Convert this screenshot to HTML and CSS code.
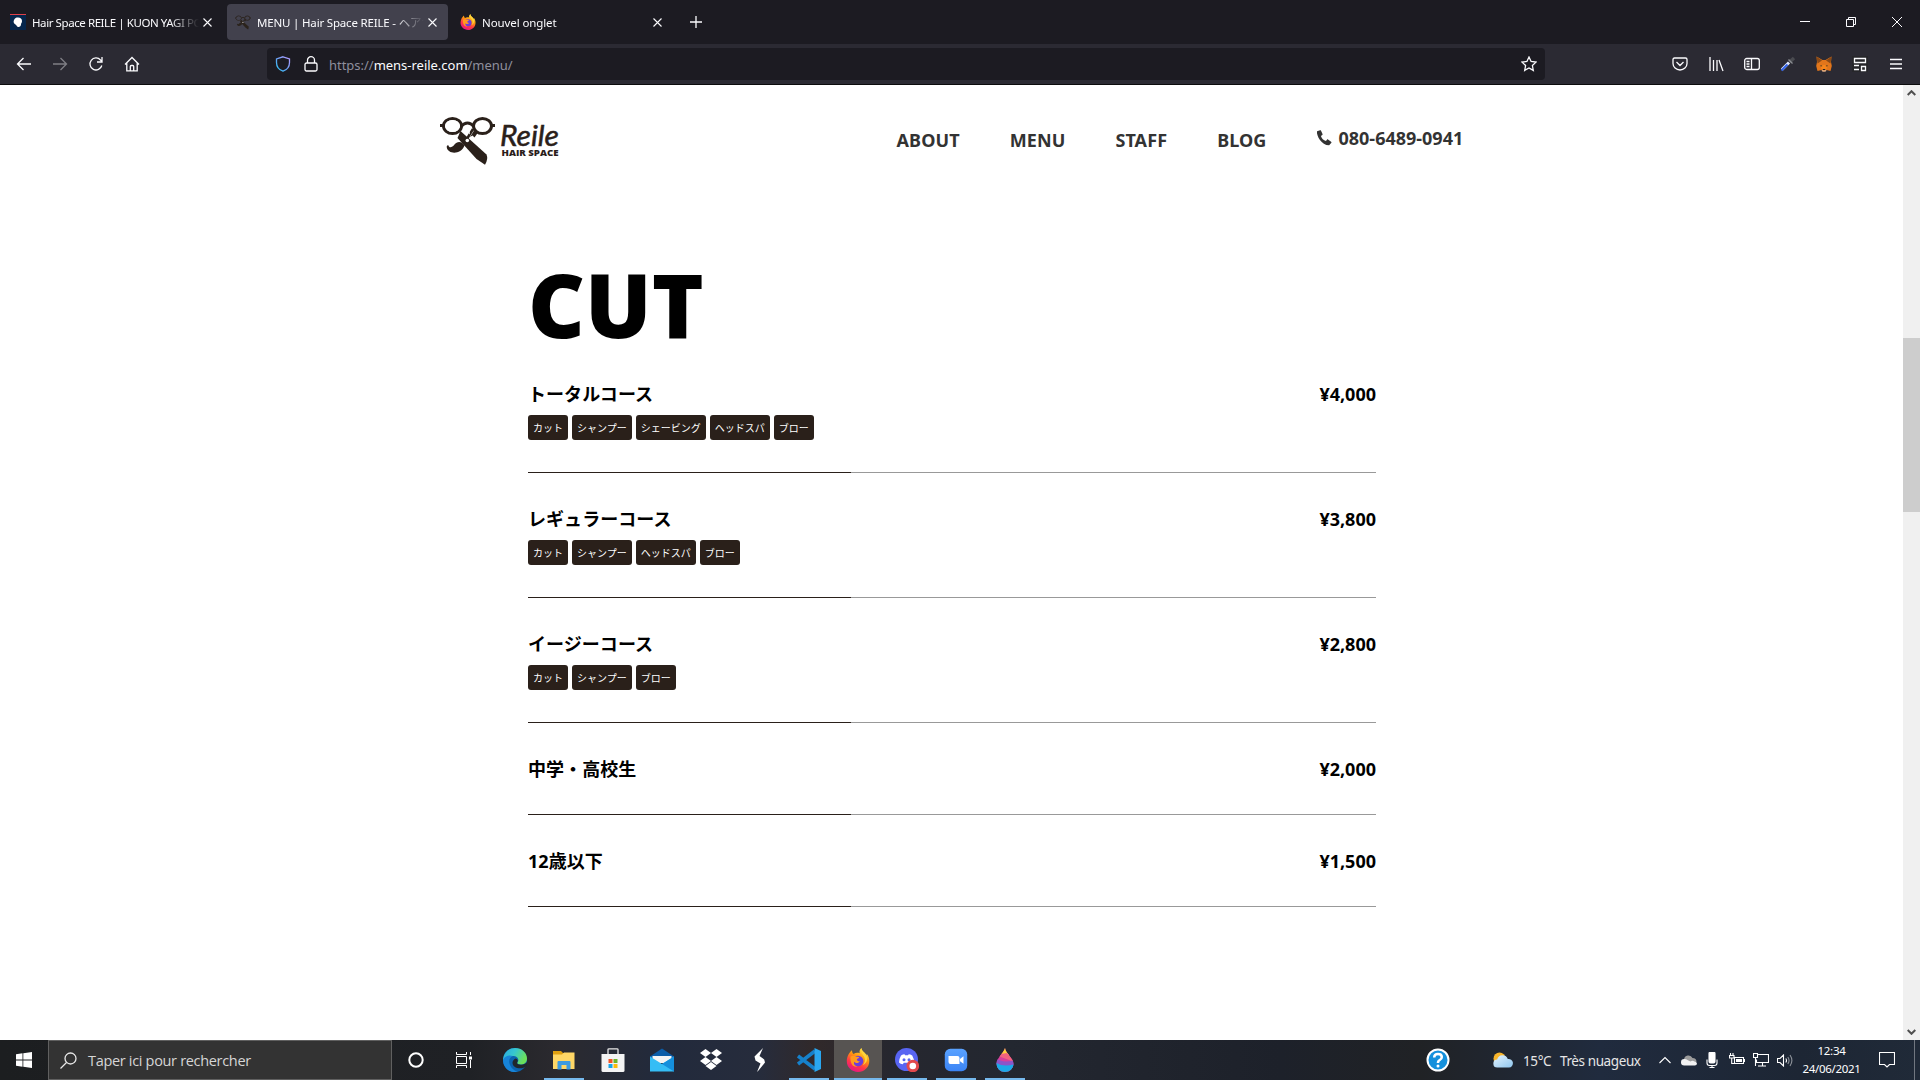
FILE: index.html
```html
<!DOCTYPE html>
<html lang="ja">
<head>
<meta charset="utf-8">
<title>MENU | Hair Space REILE</title>
<link rel="stylesheet" href="styles.css">
</head>
<body>
<svg class="defs" width="0" height="0">
  <defs>
    <linearGradient id="ffBody" x1="0.8" y1="0" x2="0.3" y2="1"><stop offset="0" stop-color="#fff44f"/><stop offset=".4" stop-color="#ff980e"/><stop offset=".7" stop-color="#ff3647"/><stop offset="1" stop-color="#e31587"/></linearGradient>
    <linearGradient id="edgeA" x1="0" y1="0" x2="1" y2=".4"><stop offset="0" stop-color="#2aa8e0"/><stop offset=".5" stop-color="#36c6cf"/><stop offset="1" stop-color="#6be05a"/></linearGradient>
    <linearGradient id="shieldG" x1="1" y1="0" x2="0" y2="1"><stop offset="0" stop-color="#b79bff"/><stop offset=".5" stop-color="#6f9ff5"/><stop offset="1" stop-color="#24c6f5"/></linearGradient>
    <linearGradient id="cloudG" x1="0" y1="0" x2="1" y2="1"><stop offset="0" stop-color="#e4f4ff"/><stop offset="1" stop-color="#8fc6ee"/></linearGradient>
    <linearGradient id="zoomG" x1="0" y1="0" x2="0" y2="1"><stop offset="0" stop-color="#5aa2ff"/><stop offset="1" stop-color="#3b84f5"/></linearGradient>
    <clipPath id="dropClip"><path d="M10 0C11 6 18.500 10 18.500 16A8.500 8 0 0 1 1.500 16C1.500 10 8 6 10 0Z"/></clipPath>
    <symbol id="firefox" viewBox="0 0 24 24">
      <path fill="url(#ffBody)" d="M15.500 0c-2 1.800-2.400 3.800-1.700 5.300-2-.8-4.600-.6-6.200.6C6.300 5.200 6 3.500 6 2.300 3.600 4 .8 8.300.8 13.300.8 19.300 5.800 24 12 24s11.300-4.700 11.300-11c0-3-1-5.500-2.600-7 .1 1 0 1.800-.2 2.300C19.800 4.800 15.400 3.400 15.500 0Z"/>
      <circle cx="12" cy="13" r="5.300" fill="#6b3ddb"/>
      <path fill="#ff9b1e" d="M4.500 8.500c2-1 4.500-.8 5.800.2 1.400.1 2.500.1 2.900.5-.1 1-1.700 1.300-2.400 2 .2 1.600 1.500 2.400 3 2.100-1 2.100-4 2.400-5.500.5-1.100 2.500 1 4.600 3.500 4.700-4.800 1-8-2.700-7.300-10Z"/>
      <path fill="#ffd43a" d="M15.500 0c-2 3 1.500 6.500 2.800 9 1.300 3 .4 6-1.500 8 4.500-2 5-6.500 3.900-9.500C19.800 4.800 15.400 3.400 15.500 0Z"/>
    </symbol>
    <symbol id="scissors" viewBox="0 0 55 48">
      <path d="M20.500 14 46.500 37.500Q48.500 42 45 47.800L36.500 42 17.500 21Z" fill="currentColor"/>
      <path d="M30 20 35 12 38 15.500 34.500 20.500 32.500 18.500Z" fill="currentColor"/>
      <g fill="none" stroke="currentColor" stroke-width="3"><ellipse cx="12.500" cy="9" rx="9" ry="7.500"/><ellipse cx="42.500" cy="9" rx="9" ry="7.500"/><path d="M21 9.500Q27.500 2.500 34 9.500"/><path d="M0 8.500H4M51 8.500H55"/></g>
      <path d="M33 12 25 25" stroke="currentColor" stroke-width="2.500"/>
      <ellipse cx="12.500" cy="9" rx="7.500" ry="6" fill="var(--lens, #fff)"/>
      <circle cx="27.300" cy="23.500" r="1.800" fill="#fff"/><path d="M25.500 13.500 30 17.500 29 11Z" fill="var(--lens, #fff)"/>
      <path fill="currentColor" d="M24.500 28.500C22 24 17 24 14.500 27.500 12 31 9 31 8.500 28.500c-1-.8-2 .2-1.700 2C8 37.500 21 38 24.500 28.500Z"/>
    </symbol>
  </defs>
</svg>

<div class="screen">
  <header class="browser">
    <div class="tabs">
      <div class="tab tab-first">
        <svg class="favicon" width="16" height="16" viewBox="0 0 16 16"><path fill="#05264c" d="M0 0h16v16H0z"/><path fill="#e04048" d="M0 0h16v1H0z"/><path fill="#fff" d="M8 3.500c2.500 0 4 1.500 4 3.500s-1 2-1 3.500-1.500 3-3 2.500-1-1.500-2.500-2.500S3 8 4 6s2-2.500 4-2.500Z"/></svg>
        <span class="tab-title">Hair Space REILE | KUON YAGI PO</span>
        <svg class="close" width="9" height="9" viewBox="0 0 9 9"><path d="m.5.500 8 8m0-8-8 8"/></svg>
      </div>
      <div class="tab tab-active">
        <svg class="favicon fav-cut" width="16" height="15"><use href="#scissors"/></svg>
        <span class="tab-title">MENU | Hair Space REILE - ヘアサ</span>
        <svg class="close" width="9" height="9" viewBox="0 0 9 9"><path d="m.5.500 8 8m0-8-8 8"/></svg>
      </div>
      <div class="tab tab-last">
        <svg class="favicon" width="16" height="16"><use href="#firefox"/></svg>
        <span class="tab-title">Nouvel onglet</span>
        <svg class="close" width="9" height="9" viewBox="0 0 9 9"><path d="m.5.500 8 8m0-8-8 8"/></svg>
      </div>
      <svg class="newtab" width="12" height="12" viewBox="0 0 12 12"><path d="M6 0v12M0 6h12"/></svg>
      <div class="win">
        <svg width="10" height="10" viewBox="0 0 10 10"><path d="M0 4.500h10"/></svg>
        <svg width="10" height="10" viewBox="0 0 10 10"><path d="M.5 2.500h7v7h-7zM2.500 2.500v-2h7v7h-2"/></svg>
        <svg width="10" height="10" viewBox="0 0 10 10"><path d="m0 0 10 10M10 0 0 10"/></svg>
      </div>
    </div>
    <div class="toolbar">
      <div class="navbtns">
        <svg width="16" height="16" viewBox="0 0 16 16"><path d="M15 8H1.500M7.500 2l-6 6 6 6"/></svg>
        <svg class="dim" width="16" height="16" viewBox="0 0 16 16"><path d="M1 8h13.500M8.500 2l6 6-6 6"/></svg>
        <svg width="16" height="16" viewBox="0 0 16 16"><path d="M13.800 9.500A6 6 0 1 1 12.500 4L14 5.500M14 1v5H9"/></svg>
        <svg width="16" height="16" viewBox="0 0 16 16"><path d="M1 8.500 8 1.500l7 7M2.800 7v7.800h10.400V7M6.300 14.500V10.500q0-1 1-1h1.400q1 0 1 1v4"/></svg>
      </div>
      <div class="urlbar">
        <svg width="16" height="16" viewBox="0 0 16 16"><path stroke="url(#shieldG)" d="M8 .8 14.500 3v3.500C14.500 10.500 12 13.800 8 15.200 4 13.800 1.500 10.500 1.500 6.500V3Z"/></svg>
        <svg class="lock" width="14" height="16" viewBox="0 0 14 16"><rect x="1" y="7" width="12" height="8" rx="1.500"/><path d="M3.500 7V4.200a3.500 3.500 0 0 1 7 0V7"/></svg>
        <span class="url">https://<b>mens-reile.com</b>/menu/</span>
        <svg class="star" width="16" height="16" viewBox="0 0 16 16"><path d="m8 1 2.100 4.500 4.900.6-3.600 3.400.9 4.900L8 12l-4.300 2.400.9-4.900L1 6.100l4.900-.6Z"/></svg>
      </div>
      <div class="exts">
        <svg width="16" height="16" viewBox="0 0 16 16"><path d="M2.500 2h11q1.500 0 1.500 1.500V7.500a7 6.500 0 0 1-14 0v-4Q1 2 2.500 2ZM4.500 6 8 9.500 11.500 6"/></svg>
        <svg width="16" height="16" viewBox="0 0 16 16"><path d="M2 1v14M5.500 4v11M9 4v11M11 4l4 11"/></svg>
        <svg width="16" height="16" viewBox="0 0 16 16"><rect x=".7" y="2.500" width="14.600" height="11" rx="2"/><path d="M7.500 2.500v11M2.500 5.500h3M2.500 8h3M2.500 10.500h3"/></svg>
        <svg width="16" height="16" viewBox="0 0 16 16"><path stroke="#4a4b50" stroke-width="3.500" d="M9.500 6 14 2"/><path stroke="#8b8d93" stroke-width="1.200" d="m8.500 3.500 4 4"/><path stroke="#dfe7ff" stroke-width="3" d="M2 13.500 9 6.500"/><path stroke="#3565e8" stroke-width="2.200" d="m1.500 14.500 6-6"/></svg>
        <svg width="16" height="16" viewBox="0 0 16 16" class="solid"><path fill="#e2761b" d="M.5.500 6.500 4h3L15.500.5 15 6l.8 4-1.300 5-4-1-1 1.500h-3l-1-1.500-4 1L.2 10 1 6Z"/><path fill="#8a4a17" d="M.5.500 6 4.500 1.500 7.500ZM15.500.5 10 4.500l4.500 3Z"/><path fill="#f6851b" d="M4 9h8l-2 5H6Z"/><path fill="#222" d="m4.500 9 2 1-1.800.5ZM11.500 9l-2 1 1.800.5ZM6.800 13h2.400v1H6.800Z"/><path fill="#d9c7bb" d="m5.500 14 1 1.600h3l1-1.600-1.500.5h-2Z"/></svg>
        <svg width="16" height="16" viewBox="0 0 16 16"><path fill="#26262a" stroke="none" d="M0 0h16v16H0z"/><path d="M2.500 2.500h11v4h-11zM9.500 10.500h4v4h-4zM2 9.500h5M2 13.500h5"/></svg>
        <svg width="16" height="16" viewBox="0 0 16 16"><path d="M2 3.500h12M2 8h12M2 12.500h12"/></svg>
      </div>
    </div>
  </header>

  <div class="viewport">
    <main class="page">
      <div class="site-head">
        <svg class="logo" width="122" height="50" viewBox="0 0 122 50">
          <use href="#scissors" width="55" height="48"/>
          <text class="logo-script" x="60" y="28.500" textLength="59" lengthAdjust="spacingAndGlyphs">Reile</text>
          <text class="logo-sub" x="61.500" y="39" textLength="57" lengthAdjust="spacingAndGlyphs">HAIR SPACE</text>
        </svg>
        <nav class="site-nav">
          <a>ABOUT</a><a>MENU</a><a>STAFF</a><a>BLOG</a>
          <a class="tel"><svg width="16" height="16" viewBox="0 0 14 14"><path d="M3.600.3.900 1.100C.2 5 5 13.500 11.500 13.400l2-2.300c.2-.4 0-.7-.3-.9L10.500 8.300c-.3-.2-.7-.1-.9.200l-.9 1.200C6.500 9 5 7.300 4.300 5.200l1.200-.9c.3-.2.400-.6.200-.9L4.400.6C4.200.3 3.900.2 3.600.3Z"/></svg>080-6489-0941</a>
        </nav>
      </div>
      <section class="menu">
        <h1>CUT</h1>
        <ul>
          <li><div class="line"><span class="name">トータルコース</span><span class="price">¥4,000</span></div><div class="tags"><i>カット</i><i>シャンプー</i><i>シェービング</i><i>ヘッドスパ</i><i>ブロー</i></div></li>
          <li><div class="line"><span class="name">レギュラーコース</span><span class="price">¥3,800</span></div><div class="tags"><i>カット</i><i>シャンプー</i><i>ヘッドスパ</i><i>ブロー</i></div></li>
          <li><div class="line"><span class="name">イージーコース</span><span class="price">¥2,800</span></div><div class="tags"><i>カット</i><i>シャンプー</i><i>ブロー</i></div></li>
          <li><div class="line"><span class="name">中学・高校生</span><span class="price">¥2,000</span></div></li>
          <li><div class="line"><span class="name">12歳以下</span><span class="price">¥1,500</span></div></li>
        </ul>
      </section>
    </main>
    <div class="scrollbar">
      <svg width="9" height="6" viewBox="0 0 9 6"><path d="M.7 5 4.500 1.200 8.300 5"/></svg>
      <div class="thumb"></div>
      <svg class="down" width="9" height="6" viewBox="0 0 9 6"><path d="M.7 1 4.500 4.800 8.300 1"/></svg>
    </div>
  </div>

  <footer class="taskbar">
    <div class="start"><svg width="16" height="16" viewBox="0 0 16 16"><path fill="#fff" d="M0 2.200 6.500 1.300V7.600H0ZM7.300 1.200 16 0V7.600H7.300ZM0 8.400H6.500V14.700L0 13.800ZM7.300 8.400H16V16L7.300 14.800Z"/></svg></div>
    <div class="search"><svg width="17" height="17" viewBox="0 0 17 17"><circle cx="10.500" cy="6.500" r="5.500"/><path d="M6.500 10.500.5 16.500"/></svg><span>Taper ici pour rechercher</span></div>
    <div class="sys"><svg width="16" height="16" viewBox="0 0 16 16"><circle cx="8" cy="8" r="6.700" fill="none" stroke="#fff" stroke-width="2"/></svg></div>
    <div class="sys"><svg width="16" height="16" viewBox="0 0 16 16" fill="none" stroke="#fff"><path d="M.5 0v2.500h10V0M.5 16v-2.500h10V16M.5 4.500h10v7H.5zM14.500 0v3M14.500 8v8"/><path fill="#fff" stroke="none" d="M13 4.500h3v3h-3z"/></svg></div>
    <div class="apps">
      <div class="app"><svg width="24" height="24" viewBox="0 0 24 24"><circle cx="12" cy="12" r="12" fill="#0c63ae"/><path fill="url(#edgeA)" d="M0 11C1 4 6 0 12 0c7 0 12 5 12 10.500 0 4-3 6-6 6-3 0-4.500-1-3.500-2.200 1.800-2 .8-5.800-3.500-6.300C6 7.500 1.500 9 0 13Z"/><path fill="#1784d8" d="M0 12c1.500-4 6-5.500 10-4-3 .8-4.500 4-3.500 7.500 1 4 4.500 7.500 8.500 8.100C6 26 0 19 0 12Z"/><path fill="#20262c" d="M12.500 10.500c2.300.5 2.800 2.300 1.800 3.700-.7 1.300.5 2.500 3.700 2.500 2.500 0 4.500-1 6-2.500v3.500l-1.200.5c-1 1.200-2.500 1.600-3.800 2-5 .8-9.700-1.500-9.500-5.700.2-1.500 1.300-3.500 3-4Z"/></svg></div>
      <div class="app open"><svg width="24" height="24" viewBox="0 0 24 24"><path fill="#e0a010" d="M1 3h8l2 2h11v5H1Z"/><path fill="#ffd766" d="M1 6.500h9L12 4.500h10.500V21H1Z"/><path fill="#3d9be0" d="M6.500 13h11q1 0 1 1v7.500h-4V17h-5v4.500h-4V14q0-1 1-1Z"/></svg></div>
      <div class="app"><svg width="24" height="24" viewBox="0 0 24 24"><path fill="none" stroke="#e8e8e8" stroke-width="1.300" d="M7 7V1.500Q7 .8 8 .8h8q1 0 1 .8V7"/><path fill="#f4f4f4" d="M.5 6h23v16.500Q23.500 24 22 24H2Q.5 24 .5 22.500Z"/><path fill="#f35325" d="M7.500 11h4v4h-4z"/><path fill="#6eb52a" d="M12.500 11h4v4h-4z"/><path fill="#18a5e8" d="M7.500 16h4v4h-4z"/><path fill="#ffba08" d="M12.500 16h4v4h-4z"/></svg></div>
      <div class="app"><svg width="24" height="24" viewBox="0 0 24 24"><path fill="#0c5da8" d="M12 .5 24 8.500v4H0v-4Z"/><path fill="#f4f4f4" d="M2.500 8h19v7h-19z"/><path fill="#35bdf5" d="M0 8.500 12 16 24 8.500V23.500H0Z"/><path fill="#158fdc" d="M12 16 24 23.500V8.500Z"/></svg></div>
      <div class="app"><svg width="24" height="24" viewBox="0 0 24 24" fill="#fff"><path d="m6.500 1 5.500 4-5.500 4L1 5Zm11 0L23 5l-5.500 4L12 5ZM1 13l5.500-4 5.500 4-5.500 4Zm16.500-4 5.500 4-5.500 4-5.500-4ZM6.500 18 12 14l5.500 4-5.500 4Z"/></svg></div>
      <div class="app"><svg width="24" height="24" viewBox="0 0 24 24" fill="#fff"><path d="M15 0 6.500 8.500 7.500 12.500l5 3L9 24l1.500-1.500 6.500-8-.8-3-4.700-3.500Z"/></svg></div>
      <div class="app open"><svg width="24" height="24" viewBox="0 0 24 24"><path fill="none" stroke="#1681cb" stroke-width="3.600" d="m1 8 17 13M1 16 18 3"/><path fill="#2aa7f0" d="m17.500 0 6.500 3v18l-6.500 3Z"/></svg></div>
      <div class="app open active"><svg width="24" height="24"><use href="#firefox"/></svg></div>
      <div class="app open"><svg width="24" height="24" viewBox="0 0 24 24"><circle cx="11.500" cy="11.500" r="11.500" fill="#5865f2"/><path fill="#fff" d="M6 7.500Q8 6.200 9.500 6.200l.6 1h3l.6-1q1.500 0 3.500 1.300 2 3.500 2 7-1.500 1.500-3.800 1.800l-1-1.500H8.800l-1 1.500Q5.500 16 4 14.500 4 11 6 7.500Z"/><circle cx="9" cy="11.800" r="1.500" fill="#5865f2"/><circle cx="14" cy="11.800" r="1.500" fill="#5865f2"/><circle cx="17.800" cy="18" r="6.300" fill="#e2494c"/><circle cx="17.800" cy="18" r="3.300" fill="#fff"/></svg></div>
      <div class="app open"><svg width="24" height="24" viewBox="0 0 24 24"><rect x=".8" y=".8" width="22.400" height="22.400" rx="5.500" fill="url(#zoomG)"/><path fill="#fff" d="M4.500 8h9q2 0 2 2v6h-9q-2 0-2-2ZM16 11l3.500-2.700v7.500L16 13.200Z"/></svg></div>
      <div class="app open"><svg width="20" height="24" viewBox="0 0 20 24"><g clip-path="url(#dropClip)"><path fill="#d83f9a" d="M0 0h20v24H0z"/><path fill="#ffd23c" d="M0 0h20v8L0 5Z"/><path fill="#f2637e" d="M0 7 12 5l8 6v3Z"/><path fill="#8b55c8" d="M0 9q6 7 20 3v7Q8 20 0 15Z"/><path fill="#1ba9e8" d="M0 14q8 6 20 2v8H0Z"/></g></svg></div>
    </div>
    <div class="tray">
      <svg class="help" width="24" height="24" viewBox="0 0 24 24"><circle cx="12" cy="12" r="10.500" fill="#1490dc" stroke="#fff" stroke-width="2"/><path fill="none" stroke="#fff" stroke-width="2.500" d="M8.200 9.500Q8.200 6 12 6t3.800 3q0 2-2 3T12 15"/><circle cx="12" cy="18" r="1.500" fill="#fff"/></svg>
      <svg class="weather" width="21" height="16" viewBox="0 0 21 16"><circle cx="6.500" cy="6.500" r="6" fill="#f7b52b"/><path fill="url(#cloudG)" d="M4.500 15.500a4 4 0 0 1-.3-8A5.500 5.500 0 0 1 14.800 7a4.300 4.300 0 1 1 1.200 8.500Z"/></svg>
      <span class="temp">15°C</span><span class="cond">Très nuageux</span>
      <svg class="chev" width="12" height="8" viewBox="0 0 12 8"><path d="m.5 7 5.500-5.500L11.500 7"/></svg>
      <svg class="od" width="16" height="11" viewBox="0 0 16 11"><path fill="#9c9c9c" d="M3 4.500a4.500 4.500 0 0 1 8.500-1.500A4 4 0 0 1 15.500 7H3Z"/><path fill="#f2f2f2" d="M3.200 10.500a3.200 3.200 0 0 1 0-6.400Q5 4 6.500 5l3 1.500q2-1.500 4 0 2.500.5 2.500 2.300-.2 1.700-2.200 1.700Z"/></svg>
      <svg class="mic" width="12" height="16" viewBox="0 0 12 16"><rect x="3" y="0" width="6" height="11" rx="1.500" fill="#fff"/><path d="M1 7.500V11q0 2.500 2.500 2.500h5Q11 13.500 11 11V7.500M6 13.500V16M3.500 15.500h5"/></svg>
      <svg class="bat" width="16" height="14" viewBox="0 0 16 14"><path d="M5.500 4.500h9v6h-9z"/><path fill="#fff" stroke="none" d="M7 6h6v3H7zM15 6h1v3h-1z"/><path d="M1.500 0v2M4 0v2M.5 2.500h4.500v2.500H.5zM2.700 5v5.500H5"/></svg>
      <svg class="net" width="16" height="14" viewBox="0 0 16 14"><path d="M5 1.500h10.500v8H3.500v-3M9.500 10v3M5 13h8M.5.500h4v4h-4zM2.500 4.500V13"/></svg>
      <svg class="vol" width="16" height="13" viewBox="0 0 16 13"><path d="M.5 4.500h2.500L6.500 1v11L3 8.500H.5zM8.800 4.500q1.400 2 0 4"/><path class="faint" d="M10.800 3q2.500 3.500 0 7M13 1q3.800 5.500 0 11"/></svg>
      <div class="clock"><span>12:34</span><span>24/06/2021</span></div>
      <svg class="notif" width="16" height="16" viewBox="0 0 16 16"><path d="M.5.500h15v12H10.500L8 15 5.500 12.500H.5z"/></svg>
      <div class="peek"></div>
    </div>
  </footer>
</div>
</body>
</html>
```
FILE: styles.css
```css
* { box-sizing: border-box; }
body { margin: 0; background: #fff; overflow: hidden; font-family: "Noto Sans", "Noto Sans CJK JP", sans-serif; }
.defs { display: block; height: 0; }
svg { flex: none; display: block; }
.screen { width: 1920px; height: 1080px; display: flex; flex-direction: column; }

/* browser chrome */
.browser { height: 85px; background: #2b2a33; border-bottom: 1px solid #0c0c0d; color: #fbfbfe; flex: none; }
.browser svg { fill: none; stroke: #fbfbfe; stroke-width: 1.3; }
.browser .favicon, .browser .solid { stroke: none; }
.tabs { height: 44px; background: #1c1b22; display: flex; align-items: center; }
.tab { height: 36px; display: flex; align-items: center; border-radius: 4px; }
.tab-first { width: 221px; padding-left: 10px; margin-right: 6px; }
.tab-active { width: 221px; background: #42414d; padding-left: 8px; }
.tab-last { width: 221px; padding-left: 12px; }
.browser .fav-cut { color: #2b231c; --lens: #42414d; }
.tab-title { margin-left: 6px; padding-top: 2px; width: 167px; font-size: 11.5px; letter-spacing: -0.18px; line-height: 20px; white-space: nowrap; overflow: hidden; flex: none; -webkit-mask-image: linear-gradient(90deg, #000 138px, transparent 167px); mask-image: linear-gradient(90deg, #000 138px, transparent 167px); }
.tab-first .tab-title { letter-spacing: -0.42px; }
.tab-last .tab-title { letter-spacing: -0.1px; }
.close { margin-left: 4px; }
.browser .close { stroke-width: 1.1; }
.newtab { margin-left: 21px; }
.win { margin-left: auto; margin-right: 18px; display: flex; gap: 36px; }
.browser .win svg { stroke-width: 1; }
.toolbar { height: 40px; display: flex; align-items: center; padding-left: 16px; }
.navbtns { display: flex; gap: 20px; width: 251px; }
.dim { opacity: .4; }
.urlbar { width: 1278px; height: 32px; background: #1c1b22; border-radius: 4px; display: flex; align-items: center; padding: 0 8px; }
.lock { margin-left: 13px; }
.url { margin-left: 11px; padding-top: 2px; font-size: 13px; letter-spacing: -.02px; color: #8f8f9d; line-height: 20px; }
.url b { font-weight: 400; color: #fbfbfe; }
.star { margin-left: auto; }
.exts { display: flex; gap: 20px; margin-left: 127px; }

/* web page */
.viewport { flex: 1; display: flex; min-height: 0; }
.page { flex: 1; background: #fff; padding-top: 32px; }
.site-head { display: flex; margin-left: 440px; height: 50px; color: #2a201a; }
.logo-script { font: italic 400 28px Lato, sans-serif; fill: #2a201a; stroke: #2a201a; stroke-width: .5; }
.logo-sub { font: 800 8.500px "Open Sans", sans-serif; fill: #2a201a; }
.site-nav { display: flex; gap: 50px; margin-left: 334.500px; font-size: 18px; font-weight: 700; letter-spacing: .1px; line-height: 24px; color: #333; padding-top: 11px; white-space: nowrap; }
.tel { display: flex; gap: 6px; align-items: center; height: 20px; letter-spacing: 0; }
.tel svg { fill: #333; }
.menu { margin: 83px 0 0 528px; width: 848px; color: #000; }
h1 { margin: 0; height: 98px; line-height: 108px; font-size: 88px; font-weight: 900; }
ul { list-style: none; margin: 0; padding: 0; }
li { padding: 32px 0; border-bottom: 1px solid #999; border-image: linear-gradient(90deg, #2a201a 323px, #999 323px) 1; }
.line { display: flex; justify-content: space-between; font-size: 18px; font-weight: 700; line-height: 29px; height: 27px; }
.name { letter-spacing: .05px; }
.tags { display: flex; gap: 4px; margin-top: 8px; }
.tags i { font-style: normal; background: #2a201a; color: #fff; font-size: 10px; line-height: 15px; padding: 6px 5px 4px; border-radius: 3px; }
.scrollbar { width: 17px; background: #f0f0f0; display: flex; flex-direction: column; align-items: center; padding: 5px 0; }
.scrollbar svg { fill: none; stroke: #505050; stroke-width: 2; }
.thumb { width: 17px; height: 174px; background: #cdcdcd; margin-top: 242px; }
.scrollbar .down { margin-top: auto; }

/* taskbar */
.taskbar { height: 40px; flex: none; display: flex; background: linear-gradient(90deg, #1c1e20 0, #1f2125 470px, #2b2a2f 560px, #222a3c 660px, #262c3c 760px, #31292a 815px, #26272f 890px, #232730 1010px, #1d212a 1280px, #202225 1420px, #202b3e 1600px, #1d2634 1800px, #202a38 1920px); color: #fff; }
.start { width: 48px; display: grid; place-items: center; }
.search { width: 344px; background: #333; border: 1px solid #606060; display: flex; align-items: center; padding-left: 11px; gap: 11px; font-family: "Open Sans", sans-serif; font-size: 14.500px; letter-spacing: -.32px; color: #d6d6d6; }
.search svg { fill: none; stroke: #e8e8e8; stroke-width: 1.3; }
.sys { width: 48px; display: grid; place-items: center; }
.apps { display: flex; gap: 1px; margin-left: 3px; }
.app { width: 48px; display: grid; place-items: center; }
.open { background: linear-gradient(#76b9ed, #76b9ed) 50% 100% / 40px 2px no-repeat; }
.active { background: linear-gradient(#76b9ed, #76b9ed) 50% 100% / 48px 2px no-repeat #575452; }
.tray { flex: 1; display: flex; align-items: center; margin-left: 397px; font-size: 13.500px; color: #e6e6e6; white-space: nowrap; }
.weather { margin-left: 43px; }
.temp { margin-left: 9px; width: 37px; letter-spacing: -.4px; padding-top: 2px; }
.cond { width: 99px; letter-spacing: -.4px; padding-top: 2px; }
.chev, .mic, .bat, .net, .vol, .notif { fill: none; stroke: #fff; stroke-width: 1.1; }
.od { margin-left: 10px; }
.mic { margin-left: 9px; }
.bat { margin-left: 11px; }
.net { margin-left: 8px; }
.vol { margin-left: 8px; }
.faint { opacity: .5; }
.clock { width: 77px; display: flex; flex-direction: column; align-items: center; font-size: 11.500px; line-height: 18px; letter-spacing: -0.300px; color: #fff; }
.notif { margin-left: 9px; }
.peek { margin-left: 19px; width: 1px; height: 40px; background: #717780; }
```
